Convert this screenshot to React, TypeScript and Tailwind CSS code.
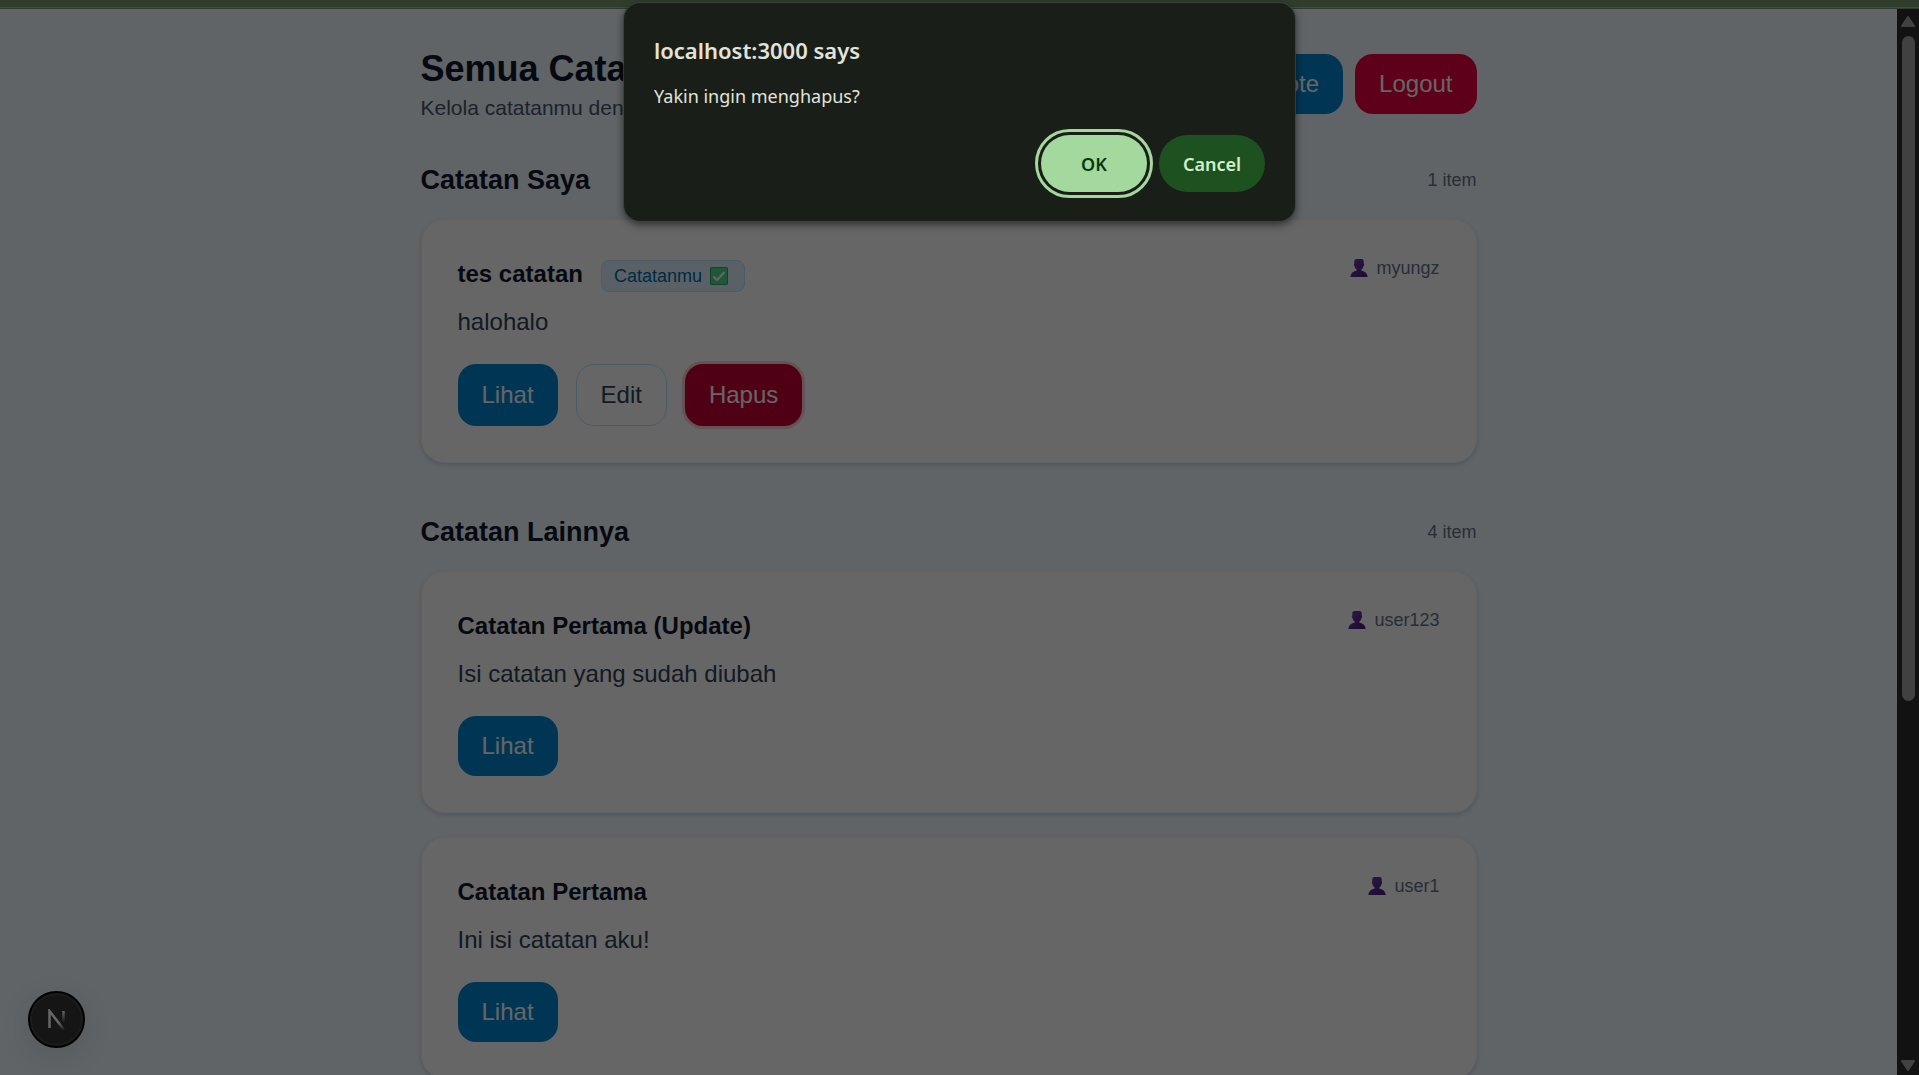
import React from "react";

type Note = { title: string; body: string; user: string; mine?: boolean };

const myNotes: Note[] = [{ title: "tes catatan", body: "halohalo", user: "myungz", mine: true }];
const otherNotes: Note[] = [
  { title: "Catatan Pertama (Update)", body: "Isi catatan yang sudah diubah", user: "user123" },
  { title: "Catatan Pertama", body: "Ini isi catatan aku!", user: "user1" },
];

function PersonIcon() {
  return (
    <svg viewBox="0 0 18 18" className="h-[18px] w-[18px]" aria-hidden="true">
      <defs>
        <linearGradient id="person" x1="0" y1="0" x2="1" y2="1">
          <stop offset="0" stopColor="#6f3fae" />
          <stop offset="1" stopColor="#471a7a" />
        </linearGradient>
      </defs>
      <path
        fill="url(#person)"
        d="M6.2 0h5.6c1.2 0 1.9 1 1.9 2.2v2.2c.7.2.7 2-.1 2.3-.3 1.700-1.1 3-2.3 3.900v1c3 .5 5.700 2.400 6.300 5.600.1.500-.1.800-.5.800H.9c-.4 0-.6-.3-.5-.8.600-3.200 3.300-5.100 6.300-5.600v-1C5.500 9.700 4.700 8.400 4.400 6.700c-.8-.3-.8-2.100-.1-2.300V2.200C4.300 1 5 0 6.200 0z"
      />
    </svg>
  );
}

function CheckIcon() {
  return (
    <svg viewBox="0 0 18 18" className="h-[18px] w-[18px]" aria-hidden="true">
      <rect width="18" height="18" rx="1.500" fill="#52d98a" />
      <rect x=".5" y=".5" width="17" height="17" rx="1.200" fill="none" stroke="#2fa866" />
      <path d="M3.500 9.500l3.500 3.500 7.500-8" fill="none" stroke="#fff" strokeWidth="2" />
    </svg>
  );
}

function NoteCard({ note }: { note: Note }) {
  return (
    <article className="rounded-3xl border border-[#f1f8ff] bg-[#fdfffc] p-9 shadow-[0_2px_4px_rgba(15,40,80,0.16)]">
      <div className="flex items-start justify-between">
        <div>
          <div className="flex h-9 items-center">
            <h3 className="text-2xl leading-9 font-semibold text-[#0f172b]">{note.title}</h3>
            {note.mine && (
              <span className="mt-1 ml-[18px] flex h-8 items-center gap-2 rounded-lg border border-[#b8e6fe] bg-[#dff2fe] pr-4 pl-3 text-lg leading-6 text-[#0069a8]">
                Catatanmu <CheckIcon />
              </span>
            )}
          </div>
          <p className="mt-3 text-2xl leading-9 text-[#314158]">{note.body}</p>
        </div>
        <span className="flex items-center gap-2 text-lg leading-6 text-[#62748e]">
          <PersonIcon />
          {note.user}
        </span>
      </div>
      <div className="mt-6 flex gap-[18px] text-2xl leading-9">
        <button className="rounded-[18px] bg-[#0084d1] px-6 py-3 text-white">Lihat</button>
        {note.mine && (
          <>
            <button className="rounded-[18px] border border-[#b8e6fe] px-6 py-3 text-[#314158]">Edit</button>
            <button className="rounded-[18px] bg-[#c70036] px-6 py-3 text-white ring-3 ring-[#ffccd3]">Hapus</button>
          </>
        )}
      </div>
    </article>
  );
}

function Section({ title, count, notes }: { title: string; count: string; notes: Note[] }) {
  return (
    <section>
      <div className="flex items-center justify-between">
        <h2 className="text-[27px] leading-[42px] font-semibold text-[#0f172b]">{title}</h2>
        <span className="text-lg leading-6 text-[#62748e]">{count}</span>
      </div>
      <div className="mt-[18px] flex flex-col gap-6">
        {notes.map((n) => (
          <NoteCard key={n.title} note={n} />
        ))}
      </div>
    </section>
  );
}

function Scrollbar() {
  return (
    <div className="flex w-[22px] shrink-0 flex-col items-center bg-[#2d2d2d] pt-[7px] pb-1" aria-hidden="true">
      <svg viewBox="0 0 14 11" className="h-[11px] w-[14px]">
        <path d="M7 1L13 10H1z" fill="#a4a4a4" stroke="#a4a4a4" strokeWidth="2" strokeLinejoin="round" />
      </svg>
      <div className="mt-[9px] h-[63%] w-[13px] rounded-full bg-[#a4a4a4]" />
      <svg viewBox="0 0 14 11" className="mt-auto h-[11px] w-[14px]">
        <path d="M7 10L13 1H1z" fill="#a4a4a4" stroke="#a4a4a4" strokeWidth="2" strokeLinejoin="round" />
      </svg>
    </div>
  );
}

function DevBadge() {
  return (
    <button
      aria-label="Next.js"
      className="absolute bottom-[27px] left-7 flex h-[57px] w-[57px] items-center justify-center rounded-full border-2 border-black bg-[#323533] shadow-[0_8px_30px_rgba(0,0,0,0.1),inset_0_0_0_2px_#454846]"
    >
      <svg viewBox="0 0 18 22" className="h-[22px] w-[18px]" aria-hidden="true">
        <defs>
          <linearGradient id="diag" x1="9" y1="10" x2="17" y2="21" gradientUnits="userSpaceOnUse">
            <stop offset=".3" stopColor="#fff" />
            <stop offset="1" stopColor="#fff" stopOpacity="0" />
          </linearGradient>
          <linearGradient id="stem" x1="0" y1="2" x2="0" y2="14" gradientUnits="userSpaceOnUse">
            <stop stopColor="#fff" />
            <stop offset="1" stopColor="#fff" stopOpacity="0" />
          </linearGradient>
        </defs>
        <path d="M1.500 19V2L17 22" fill="none" stroke="url(#diag)" strokeWidth="2.500" />
        <path d="M15.500 2v13" fill="none" stroke="url(#stem)" strokeWidth="2.500" />
      </svg>
    </button>
  );
}

export default function App() {
  return (
    <div className="relative flex h-screen flex-col overflow-hidden font-['Liberation_Sans',Arial,sans-serif]">
      <div className="shrink-0 bg-[#78996e] pb-px">
        <div className="h-2 border-b border-[#a5c39b]" />
      </div>
      <div className="flex min-h-0 flex-1">
        <main className="min-w-0 flex-1 overflow-hidden bg-[#f0f9ff]">
          <div className="mx-auto max-w-[1056px] pt-9">
            <header className="flex items-center justify-between">
              <div>
                <h1 className="text-4xl leading-[48px] font-bold text-[#0f172b]">Semua Catatan</h1>
                <p className="text-[21px] leading-[30px] text-[#45556c]">Kelola catatanmu dengan</p>
              </div>
              <div className="flex gap-3 text-2xl leading-9 text-white">
                <button className="rounded-[18px] bg-[#0084d1] px-6 py-3">+ New Note</button>
                <button className="rounded-[18px] bg-[#ec003f] px-6 py-3">Logout</button>
              </div>
            </header>
            <div className="mt-9 flex flex-col gap-12">
              <Section title="Catatan Saya" count="1 item" notes={myNotes} />
              <Section title="Catatan Lainnya" count="4 item" notes={otherNotes} />
            </div>
          </div>
        </main>
        <Scrollbar />
      </div>
      <DevBadge />
      <div className="absolute inset-0 bg-black/60" />
      <div
        role="dialog"
        aria-labelledby="dialog-title"
        className="absolute inset-x-0 top-[3px] mx-auto w-[671px] rounded-2xl bg-[#1a1e18] px-[30px] pt-[29px] pb-[29px] font-['Noto_Sans','Open_Sans',sans-serif] shadow-[0_0_0_1px_rgba(62,66,68,0.8),0_3px_8px_rgba(0,0,0,0.6)]"
      >
        <h2 id="dialog-title" className="text-[22px] leading-9 font-semibold text-[#e1e4db]">
          localhost:3000 says
        </h2>
        <p className="mt-3 text-lg leading-8 text-[#e1e4db]">Yakin ingin menghapus?</p>
        <div className="mt-[23px] flex justify-end gap-3 text-lg leading-7 font-semibold">
          <button className="h-[57px] w-[106px] rounded-full bg-[#a4d99d] text-[#08390f] outline-3 outline-offset-3 outline-[#a4d99d]">
            OK
          </button>
          <button className="h-[57px] w-[106px] rounded-full bg-[#1e5120] text-[#d0f0c8]">Cancel</button>
        </div>
      </div>
    </div>
  );
}
